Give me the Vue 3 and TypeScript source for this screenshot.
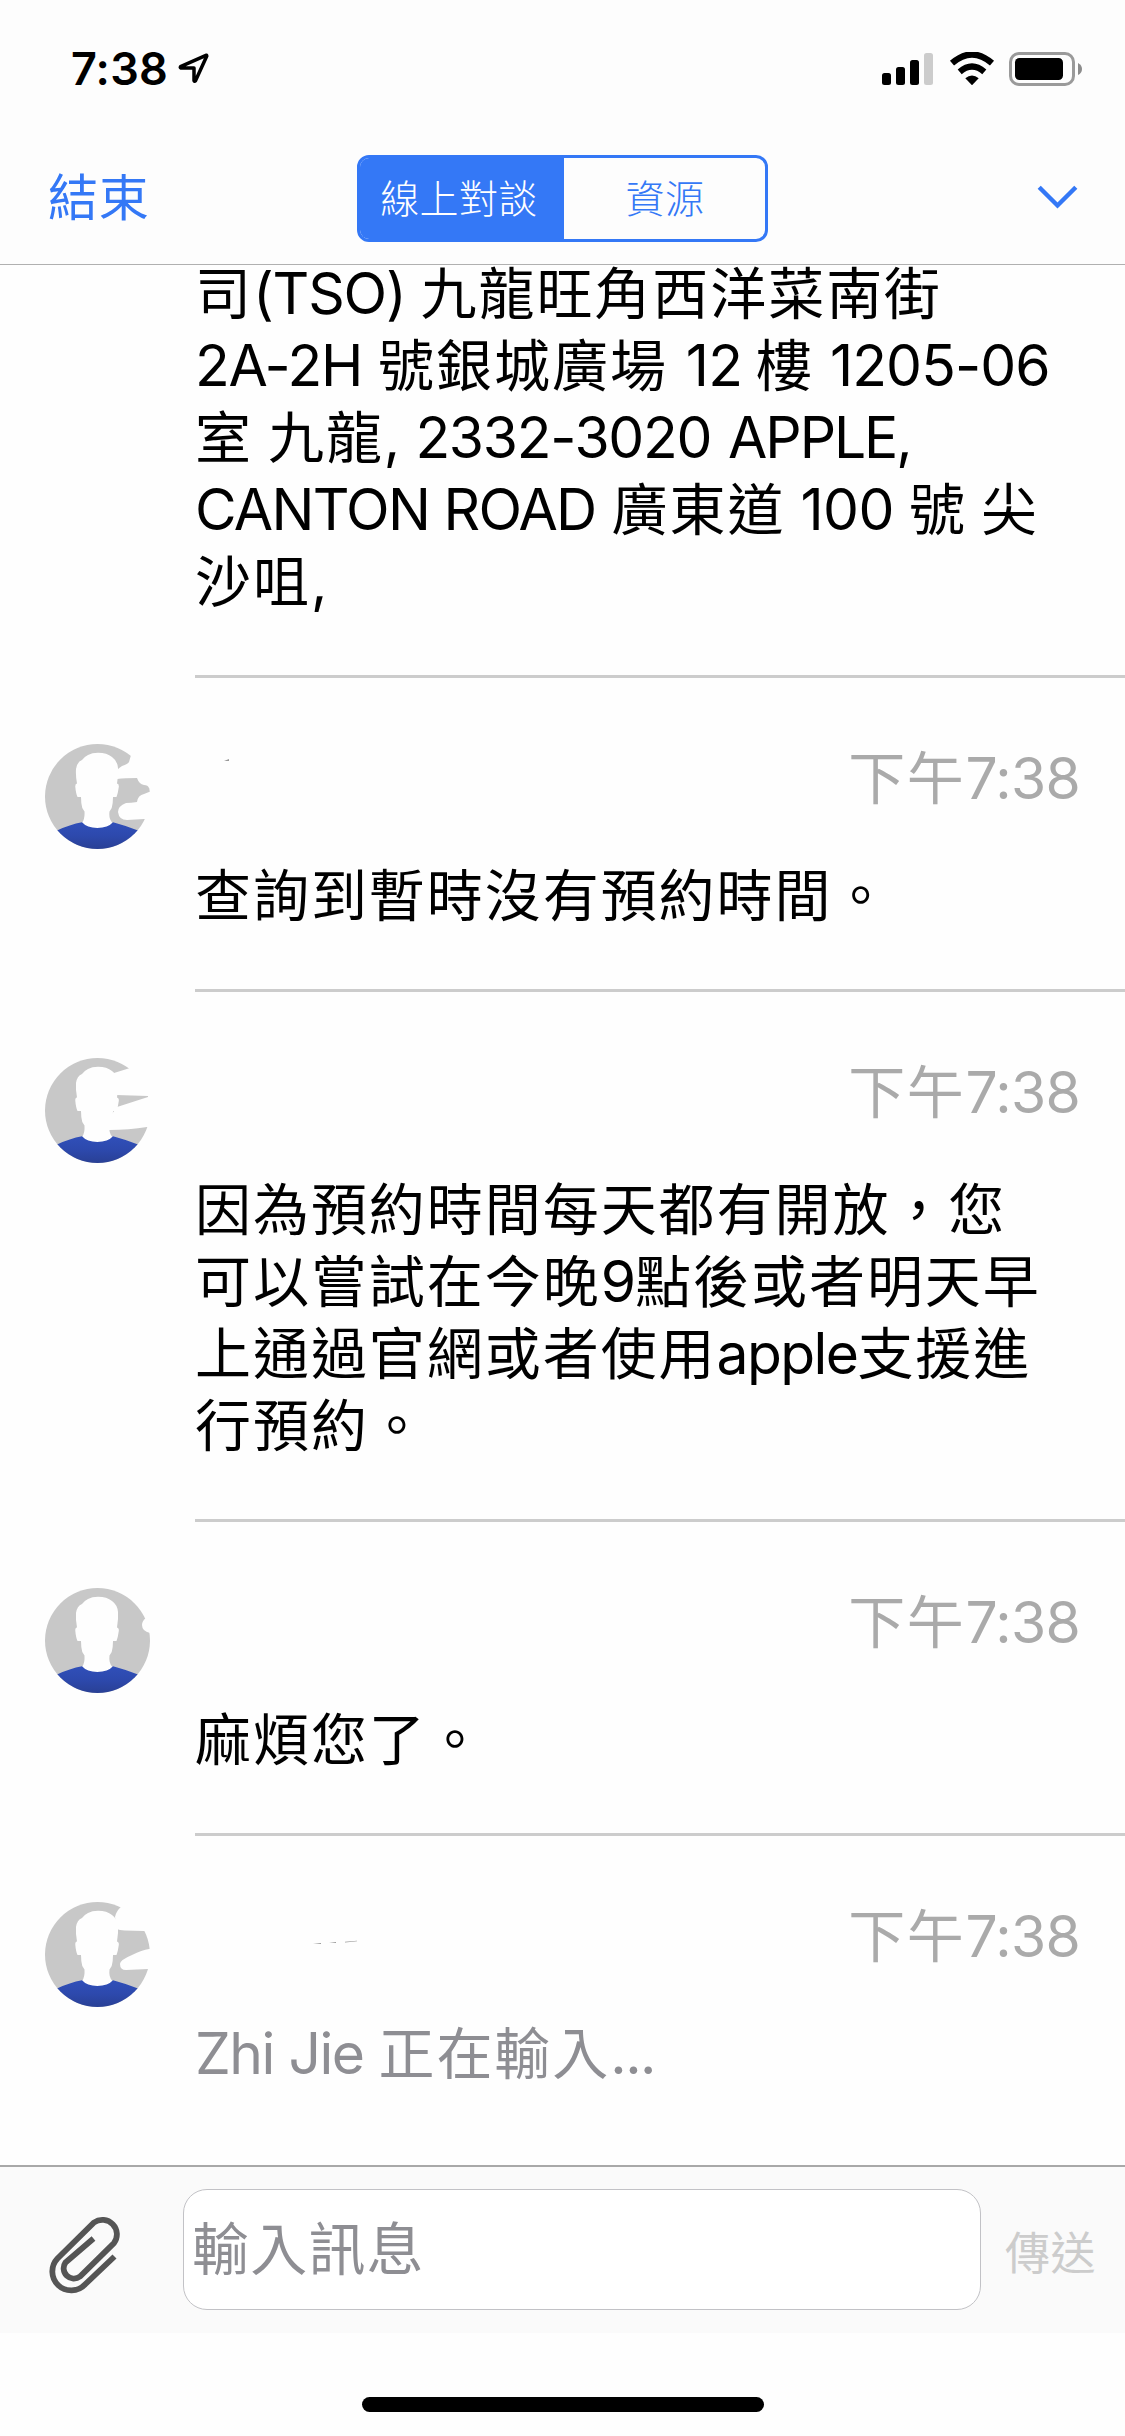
<script setup lang="ts">
interface Segment {
  text: string
  latin?: boolean
  spacing?: number
  gap?: number
}

interface Message {
  id: number
  time: string
  lines: Segment[][]
  cuts: string[]
  marks?: string[]
  typing?: boolean
}

const addressLines: Segment[][] = [
  [{ text: '司' }, { text: '(TSO)', latin: true, spacing: -1.2 }, { text: '九龍旺角西洋菜南街', gap: 15 }],
  [
    { text: '2A-2H', latin: true, spacing: -1.3 },
    { text: '號銀城廣場', gap: 16 },
    { text: '12', latin: true, gap: 18 },
    { text: '樓', gap: 14 },
    { text: '1205-06', latin: true, gap: 16 },
  ],
  [
    { text: '室' },
    { text: '九龍', gap: 15 },
    { text: ',', latin: true },
    { text: '2332-3020', latin: true, spacing: -1.3, gap: 16 },
    { text: 'APPLE,', latin: true, spacing: -2.1, gap: 17 },
  ],
  [
    { text: 'CANTON ROAD', latin: true, spacing: -1.7 },
    { text: '廣東道', gap: 16 },
    { text: '100', latin: true, spacing: -0.5, gap: 15 },
    { text: '號', gap: 15 },
    { text: '尖', gap: 14 },
  ],
  [{ text: '沙咀' }, { text: ',', latin: true }],
]

const messages: Message[] = [
  {
    id: 1,
    time: '7:38',
    lines: [[{ text: '查詢到暫時沒有預約時間。' }]],
    cuts: [
      'M86 11L84 18Q83 20 77 22Q74 24 72 26V35Q80 34 92 34Q94 40 99 41Q103 41 104 44L112 43V8Z',
      'M104 48L99 50Q93 51 92 58Q86 59 81 59Q73 62 73 68Q74 76 82 76L99 75L112 75V46Z',
    ],
    marks: ['M29 18L34 16V18Z'],
  },
  {
    id: 2,
    time: '7:38',
    lines: [
      [{ text: '因為預約時間每天都有開放，您' }],
      [{ text: '可以嘗試在今晚' }, { text: '9', latin: true }, { text: '點後或者明天早' }],
      [{ text: '上通過官網或者使用' }, { text: 'apple', latin: true, spacing: -1.6 }, { text: '支援進' }],
      [{ text: '行預約。' }],
    ],
    cuts: ['M85 10L69 15L71 37L103 38L112 38V8Z', 'M103 39L72 49L64 60V72Q84 72 102 69H112V37Z'],
  },
  {
    id: 3,
    time: '7:38',
    lines: [[{ text: '麻煩您了。' }]],
    cuts: ['M101 30Q97 33 97 37Q97 43 105 45L112 45V30Z'],
  },
  {
    id: 4,
    time: '7:38',
    typing: true,
    lines: [
      [
        { text: 'Zhi Jie', latin: true, spacing: -1.5 },
        { text: '正在輸入', gap: 15 },
        { text: '...', latin: true, spacing: -1.5 },
      ],
    ],
    cuts: [
      'M77 4Q71 9 70 15L72 27Q74 28 80 28.500L99 29L112 29V0Z',
      'M104 47Q97 48 87 53Q75 58 75 62Q75 68 81 68L103 67L112 67V45Z',
    ],
    marks: ['M118 42.500L126 42V43Z', 'M134 41.500L141 41V42Z', 'M150 40.800L162 39.800V40.300L150 41.500Z'],
  },
]

const segStyle = (s: Segment) => ({
  marginLeft: s.gap ? `${s.gap}px` : undefined,
  letterSpacing: s.spacing !== undefined ? `${s.spacing}px` : undefined,
})
</script>

<template>
  <div class="screen">
    <header class="top">
      <div class="status">
        <div class="clock">
          <span>7:38</span>
          <svg width="32" height="32" viewBox="0 0 32 32">
            <path d="M28.500 3.200L2.500 14.700Q1.800 15.600 3 16H16V28.500Q16.500 29.800 17.500 28.800L28.800 4Z" fill="none" stroke="#000" stroke-width="3.500" stroke-linejoin="round" />
          </svg>
        </div>
        <div class="indicators">
          <svg width="51" height="34" viewBox="0 0 51 34">
            <rect x="0" y="21" width="9" height="12" rx="2.500" />
            <rect x="14" y="15" width="9" height="18" rx="2.500" />
            <rect x="28" y="8" width="9" height="25" rx="2.500" />
            <rect x="42" y="1" width="9" height="32" rx="2.500" fill="#ccc" />
          </svg>
          <svg class="wifi" width="46" height="34" viewBox="0 0 46 34">
            <path d="M3 11.200Q23-6.200 43 11.200M10.700 19.800Q23 9.300 35.300 19.800" fill="none" stroke="#000" stroke-width="6.200" />
            <path d="M16.300 26.200Q23 20.800 29.700 26.200L23.500 32.800Q23 33.200 22.500 32.800Z" />
          </svg>
          <svg class="battery" width="74" height="34" viewBox="0 0 74 34">
            <rect x="1.500" y="1.500" width="63" height="31" rx="8.500" fill="none" stroke="#9a9a9a" stroke-width="3" />
            <rect x="6" y="6" width="48" height="22" rx="4.500" />
            <path d="M69 11Q73 13 73 17T69 23Z" fill="#8c8c8c" />
          </svg>
        </div>
      </div>
      <nav class="nav">
        <button class="end">結束</button>
        <div class="tabs">
          <button class="tab active">線上對談</button>
          <button class="tab">資源</button>
        </div>
        <svg class="chevron" width="41" height="24" viewBox="0 0 41 24">
          <path d="M2.200 2.200L20.500 20.500L38.800 2.200" fill="none" stroke="#3478f6" stroke-width="4.400" />
        </svg>
      </nav>
    </header>

    <main class="thread">
      <section class="message first">
        <div class="body">
          <p v-for="(line, i) in addressLines" :key="i" class="line">
            <span v-for="(s, j) in line" :key="j" :class="{ latin: s.latin }" :style="segStyle(s)">{{ s.text }}</span>
          </p>
        </div>
      </section>

      <section v-for="m in messages" :key="m.id" class="message">
        <svg class="avatar" width="105" height="105" viewBox="0 0 105 105">
          <defs>
            <linearGradient id="shirt" x1="0" y1="0" x2="0" y2="1">
              <stop offset="0" stop-color="#304fb9" />
              <stop offset="0.500" stop-color="#2d49ad" />
              <stop offset="1" stop-color="#294095" />
            </linearGradient>
            <clipPath id="disc"><circle cx="52.500" cy="52.500" r="52.500" /></clipPath>
          </defs>
          <g clip-path="url(#disc)">
            <rect width="105" height="105" fill="#c8c8c8" />
            <path d="M53 8.700Q47 8.700 43 11Q39 13 37 16Q32 18 31 25Q30.500 31 32 39.500Q30 39.500 30.300 43Q31 50 32.500 53H36Q36 60 37.300 64L39.500 67.500Q40 75 37 79L36 86H69L67.500 79Q63.500 75 64.500 67.500L66.700 64Q68 60 68 53H71.500Q73 49 73.800 43Q74.200 40 72 39.500Q73.500 31 73 24Q72.500 17 67 13Q62 8.700 53 8.700Z" fill="#fefefe" />
            <path d="M12 86.500Q25 80.500 37 78.300Q42 84 52.300 84Q63 84 68 78.300Q80 81.500 93 86.500V105H12Z" fill="url(#shirt)" />
          </g>
          <path v-for="cut in m.cuts" :key="cut" :d="cut" fill="#fefefe" />
        </svg>
        <div class="content">
          <div class="meta">
            <svg class="name" width="300" height="70" viewBox="0 0 300 70">
              <path v-for="mark in m.marks" :key="mark" :d="mark" fill="#999" />
            </svg>
            <span class="time">下午<span class="latin">{{ m.time }}</span></span>
          </div>
          <div class="body" :class="{ typing: m.typing }">
            <p v-for="(line, i) in m.lines" :key="i" class="line">
              <span v-for="(s, j) in line" :key="j" :class="{ latin: s.latin }" :style="segStyle(s)">{{ s.text }}</span>
            </p>
          </div>
        </div>
      </section>
    </main>

    <footer class="composer">
      <svg class="clip" width="74" height="80" viewBox="0 0 74 80">
        <path d="M65.500 41.500L36 69.500A18.600 18.600 0 0 1 8.500 43.500L45 7.500A14.500 14.500 0 0 1 65 28L31 61.500A10.200 10.200 0 0 1 16.500 47.500L44.500 23.500" fill="none" stroke="#555" stroke-width="5.800" />
      </svg>
      <div class="field">輸入訊息</div>
      <button class="send">傳送</button>
    </footer>
    <div class="home"><div class="home-bar"></div></div>
  </div>
</template>

<style>
body {
  background: #fefefe;
}
</style>

<style scoped>
.screen {
  width: 1125px;
  height: 2436px;
  display: flex;
  flex-direction: column;
  overflow: hidden;
  background: #fefefe;
  color: #000;
  font-family: Inter, "Noto Sans CJK TC", sans-serif;
  font-weight: 400;
}
button {
  margin: 0;
  padding: 0;
  border: 0;
  background: none;
  font: inherit;
}
svg {
  display: block;
  flex: none;
}
.top {
  flex: none;
  height: 264px;
  background: #fdfdfd;
  border-bottom: 1px solid #b0b0b0;
}
.status {
  height: 132px;
  display: flex;
  justify-content: space-between;
  padding: 0 42px 0 71px;
}
.clock {
  display: flex;
  align-items: flex-start;
  padding-top: 42px;
  font-size: 45px;
  line-height: 54px;
  font-weight: 600;
  letter-spacing: 0.200px;
}
.clock span {
  width: 107px;
}
.clock svg {
  margin-top: 10px;
}
.indicators {
  display: flex;
  align-items: flex-start;
  padding-top: 52px;
}
.wifi {
  margin-left: 16px;
}
.battery {
  margin-left: 14px;
}
.nav {
  height: 132px;
  display: grid;
  grid-template-columns: 357px 411px 1fr;
  align-items: center;
}
.end {
  padding-left: 48px;
  text-align: left;
  font-size: 50px;
  letter-spacing: 0.800px;
  line-height: 72px;
  color: #3478f6;
}
.tabs {
  display: flex;
  box-sizing: border-box;
  height: 87px;
  border: 3px solid #3478f6;
  border-radius: 12px;
  overflow: hidden;
}
.tab {
  flex: 1;
  padding: 0 0 4px 1px;
  font-size: 39px;
  font-weight: 300;
  letter-spacing: 0.400px;
  color: #3478f6;
}
.tab.active {
  flex: 0 0 204px;
  box-sizing: border-box;
  padding: 0 6px 4px 0;
  background: #3478f6;
  color: #fff;
}
.chevron {
  justify-self: end;
  margin: 0 47px 2px 0;
}
.thread {
  flex: 1;
  min-height: 0;
  overflow: hidden;
}
.message {
  display: flex;
  padding-left: 45px;
}
.avatar {
  margin: 66px 45px 0 0;
}
.message .content {
  flex: 1;
  border-bottom: 3px solid #ccc;
  padding-bottom: 57px;
}
.message:last-child .content {
  border-bottom: 0;
}
.first {
  margin-top: -7px;
  padding-left: 195px;
}
.first .body {
  flex: 1;
  padding-bottom: 57px;
  border-bottom: 3px solid #ccc;
}
.meta {
  height: 182px;
  display: flex;
  justify-content: space-between;
  align-items: flex-start;
  padding: 65px 45px 0 0;
  box-sizing: border-box;
}
.time {
  color: #aaa;
  font-size: 57px;
  line-height: 72px;
  letter-spacing: 1.700px;
}
.time .latin {
  letter-spacing: -0.700px;
}
.line {
  margin: 0;
  height: 72px;
  line-height: 72px;
  font-size: 56px;
  letter-spacing: 1.950px;
  white-space: nowrap;
}
.latin {
  font-size: 57px;
  letter-spacing: -0.900px;
}
.typing {
  color: #8e8e93;
}
.composer {
  flex: none;
  box-sizing: border-box;
  height: 168px;
  display: flex;
  align-items: flex-start;
  background: #fafafa;
  border-top: 2px solid #a8a8a8;
}
.clip {
  margin: 48px 0 0 49px;
}
.field {
  box-sizing: border-box;
  width: 798px;
  height: 121px;
  margin: 22px 0 0 60px;
  padding-left: 8px;
  border: 1px solid #c2c2c6;
  border-radius: 24px;
  background: #fff;
  color: #8e8e93;
  font-size: 57px;
  letter-spacing: 1.200px;
  line-height: 119px;
}
.send {
  margin: 55px 0 0 24px;
  color: #ccc;
  font-size: 45px;
  letter-spacing: 0.500px;
  line-height: 64px;
}
.home {
  flex: none;
  height: 103px;
  display: flex;
  justify-content: center;
  align-items: flex-start;
}
.home-bar {
  width: 402px;
  height: 15px;
  margin-top: 64px;
  border-radius: 8px;
  background: #000;
}
</style>
